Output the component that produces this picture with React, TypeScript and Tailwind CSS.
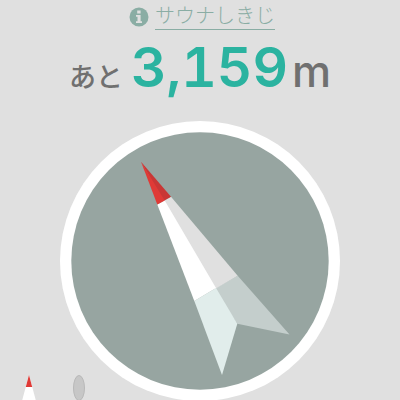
import React from 'react';

interface DestinationProps {
  name: string;
  distance: number;
}

const InfoIcon = () => (
  <svg viewBox="0 0 20 20" className="w-5 h-5 shrink-0" aria-hidden="true">
    <circle cx="10" cy="10" r="9.5" fill="#8aada4" />
    <path d="M8.2 3.6h3.4v2.8H8.2zM7 8h4.6v6.2H13v1.8H7v-1.8h1.5V9.8H7z" fill="#e0e0e0" />
  </svg>
);

const Destination = ({ name, distance }: DestinationProps) => (
  <header className="flex flex-col items-center">
    <a href="#info" className="flex items-center gap-1.5 pt-1 pl-1 text-[#8aada4]">
      <InfoIcon />
      <span className="border-b border-[#8aada4] text-xl leading-[25px] font-light">{name}</span>
    </a>
    <h1 className="flex items-baseline mt-2 leading-[58px] text-[#707070]">
      <span className="mr-2 text-[27px] font-medium">あと</span>
      <span className="mr-1 text-[55px] font-semibold tabular-nums text-[#2bb3a0]">{distance.toLocaleString('en-US')}</span>
      <span className="text-[44px] font-medium">m</span>
    </h1>
  </header>
);

const Compass = () => (
  <svg viewBox="0 0 280 280" className="block w-[70%] mx-auto" role="img" aria-label="Compass">
    <circle cx="140" cy="140" r="140" fill="#fff" />
    <circle cx="140" cy="140" r="128.7" fill="#97a5a1" />
    {/* shaded half, runs a little under the lit one so no seam shows */}
    <path d="M154 168 177.7 154.7 229.5 213.4 177.3 202.7z" fill="#c4cecc" />
    <path d="M103.5 80 111 75.7 177.7 154.7 155 168z" fill="#e0e0e0" />
    <path d="M81 40.7 111 75.7 103.5 80z" fill="#c93735" />
    {/* lit half */}
    <path d="M134.3 180 156 166.9 177.3 202.7 162 254z" fill="#e1edeb" />
    <path d="M97.3 83.6 104.7 79.5 156 166.9 134.3 180z" fill="#fff" />
    <path d="M81 40.7 104.7 79.5 97.3 83.6z" fill="#e03a36" />
  </svg>
);

const Legend = () => (
  <div className="absolute bottom-0 left-[21px] flex items-end gap-9">
    <svg viewBox="0 0 16 26" className="w-4 h-[26px]" aria-hidden="true">
      <path d="M8 0 15 26H1z" fill="#fff" />
      <path d="M8 0 11.2 12H4.8z" fill="#e03a36" />
    </svg>
    <svg viewBox="0 0 12 26" className="w-3 h-[26px]" aria-hidden="true">
      <ellipse cx="6" cy="13" rx="5.5" ry="12.5" fill="#c7c7c7" stroke="#b8b8b8" />
    </svg>
  </div>
);

const App = () => {
  return (
    <main
      className="h-screen overflow-hidden bg-[#e0e0e0] font-['Inter','Noto_Sans_CJK_JP',sans-serif]"
      lang="ja"
    >
      <Destination name="サウナしきじ" distance={3159} />
      <section className="relative mt-3.5">
        <Compass />
        <Legend />
      </section>
    </main>
  );
};

export default App;
